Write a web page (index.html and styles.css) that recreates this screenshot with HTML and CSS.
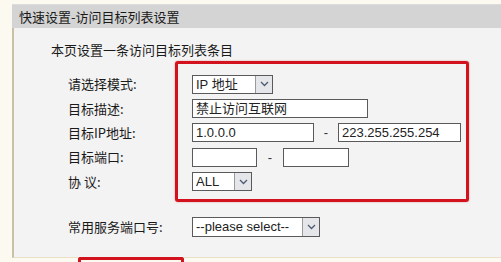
FILE: index.html
```html
<!DOCTYPE html>
<html lang="zh-CN">
<head>
<meta charset="utf-8">
<title>快速设置-访问目标列表设置</title>
<link rel="stylesheet" href="styles.css">
</head>
<body>
<div class="panel">
  <div class="head">快速设置-访问目标列表设置</div>
  <div class="content">
    <p class="intro">本页设置一条访问目标列表条目</p>
    <div class="form">
      <div class="label">请选择模式:</div>
      <div class="ctrl">
        <div class="select w81"><span class="val">IP 地址</span><span class="arrow"><svg width="9" height="6" viewBox="0 0 9 6"><path d="M1 1 L4.5 4.5 L8 1" fill="none" stroke="#4d5b70" stroke-width="1.3"/></svg></span></div>
      </div>
      <div class="label">目标描述:</div>
      <div class="ctrl"><div class="input w176">禁止访问互联网</div></div>
      <div class="label">目标IP地址:</div>
      <div class="ctrl">
        <div class="input w122">1.0.0.0</div>
        <span class="dash d24">-</span>
        <div class="input w123">223.255.255.254</div>
      </div>
      <div class="label">目标端口:</div>
      <div class="ctrl">
        <div class="input w65"></div>
        <span class="dash d26">-</span>
        <div class="input w66"></div>
      </div>
      <div class="label">协 议:</div>
      <div class="ctrl">
        <div class="select w60"><span class="val">ALL</span><span class="arrow"><svg width="9" height="6" viewBox="0 0 9 6"><path d="M1 1 L4.5 4.5 L8 1" fill="none" stroke="#4d5b70" stroke-width="1.3"/></svg></span></div>
      </div>
    </div>
    <div class="svc">
      <div class="label">常用服务端口号:</div>
      <div class="ctrl">
        <div class="select w128 h20"><span class="val">--please select--</span><span class="arrow"><svg width="9" height="6" viewBox="0 0 9 6"><path d="M1 1 L4.5 4.5 L8 1" fill="none" stroke="#4d5b70" stroke-width="1.3"/></svg></span></div>
      </div>
    </div>
    <div class="mark"></div>
    <div class="mark-btn"></div>
  </div>
</div>
</body>
</html>
```
FILE: styles.css
```css
html, body {
  margin: 0;
  padding: 0;
}
body {
  width: 501px;
  height: 262px;
  overflow: hidden;
  background: #fcfaf0;
  font-family: "Noto Sans CJK SC", "Liberation Sans", sans-serif;
  color: #222;
}
.panel {
  margin: 4px 0 0 12px;
}
.head {
  height: 24px;
  line-height: 24px;
  background: #d4d4d4;
  border-top: 1px solid #dcdcdc;
  box-sizing: border-box;
  padding-left: 7px;
  font-size: 13px;
  color: #1a1a1a;
}
.content {
  position: relative;
  height: 229px;
  background: #f3f3f3;
  border-left: 2px solid #c9c0a8;
  border-bottom: 1px solid #e8dfc6;
}
.intro {
  margin: 0;
  padding: 12px 0 0 37px;
  height: 20px;
  line-height: 20px;
  font-size: 13px;
  color: #1a1a1a;
}
.form {
  margin-top: 12px;
  padding-left: 54px;
  display: grid;
  grid-template-columns: 124px auto;
  grid-auto-rows: 24.4px;
}
.label {
  font-size: 13px;
  line-height: 24px;
  display: flex;
  align-items: center;
  color: #1a1a1a;
}
.ctrl {
  display: flex;
  align-items: center;
}
.input, .select {
  box-sizing: border-box;
  height: 19px;
  border: 1px solid #5a5a5a;
  background: #fff;
  font-family: "Liberation Sans", "Noto Sans CJK SC", sans-serif;
  font-size: 13px;
  line-height: 17px;
  padding-left: 3px;
  color: #222;
  white-space: nowrap;
  overflow: hidden;
}
.select {
  display: flex;
  padding-left: 0;
}
.select .val {
  flex: 1;
  padding-left: 3px;
}
.select .arrow {
  width: 16px;
  border-left: 1px solid #9a9a9a;
  background: #e4e6ea;
  display: flex;
  align-items: center;
  justify-content: center;
}
.h20 { height: 20px; line-height: 18px; }
.w60 { width: 60px; }
.w65 { width: 65px; }
.w66 { width: 66px; }
.w81 { width: 81px; }
.w122 { width: 122px; }
.w123 { width: 123px; }
.w128 { width: 128px; }
.w176 { width: 176px; }
.dash {
  text-align: center;
  font-family: "Liberation Sans", sans-serif;
  font-size: 13px;
  color: #333;
}
.d24 { width: 24px; }
.d26 { width: 26px; }
.svc {
  margin-top: 21px;
  padding-left: 54px;
  display: grid;
  grid-template-columns: 124px auto;
  height: 24px;
}
.mark {
  position: absolute;
  left: 161px;
  top: 33px;
  width: 294px;
  height: 141px;
  box-sizing: border-box;
  border: 3px solid #d2121c;
  border-radius: 3px;
  box-shadow: 0 0 1.5px rgba(210, 18, 28, 0.6);
}
.mark-btn {
  position: absolute;
  left: 64px;
  top: 229px;
  width: 106px;
  height: 5px;
  box-sizing: border-box;
  border: 3px solid #d2121c;
  border-bottom: 0;
  border-radius: 3px 3px 0 0;
}
```
